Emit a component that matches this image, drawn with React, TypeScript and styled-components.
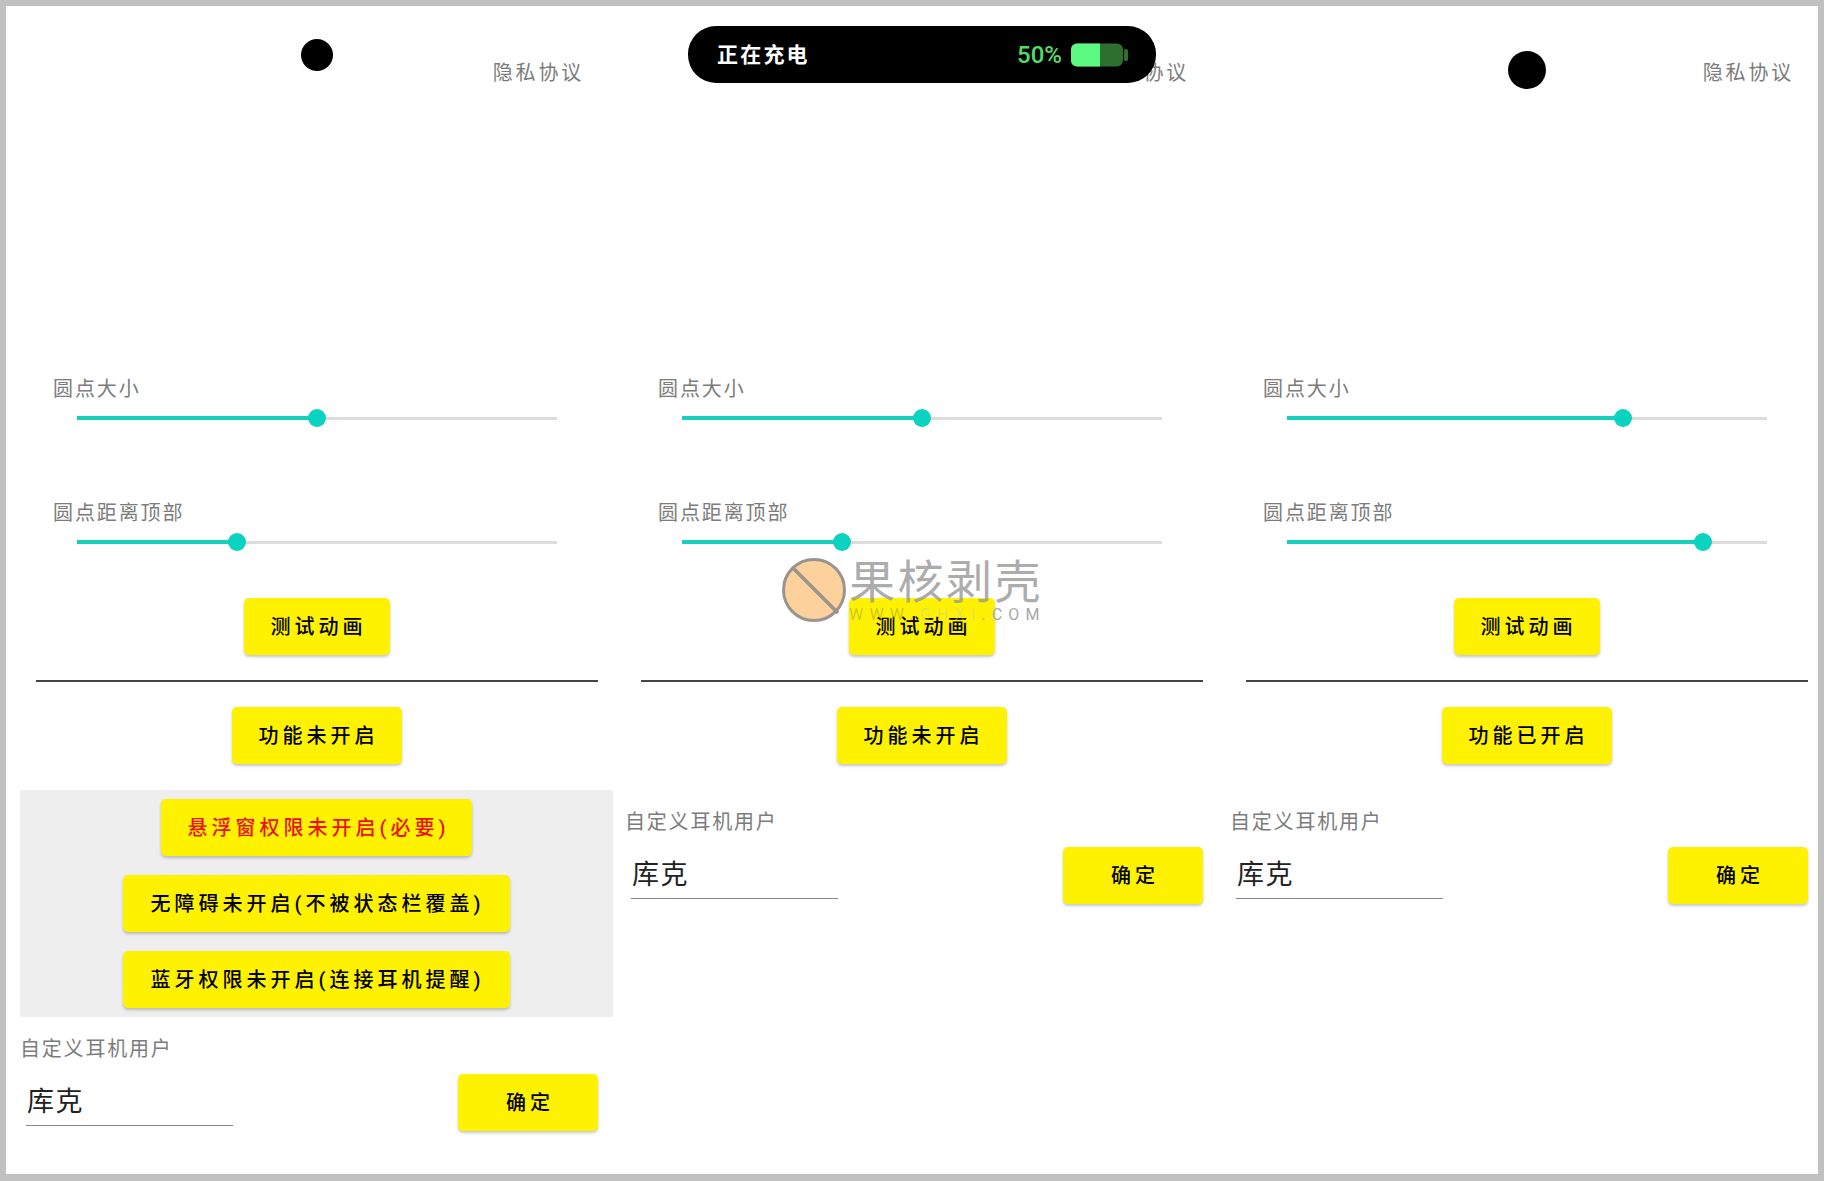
import React from "react";
import styled, { createGlobalStyle } from "styled-components";

const Global = createGlobalStyle`
  html, body { margin: 0; padding: 0; background: #fff; }
  body { font-family: Roboto, "Noto Sans CJK SC", sans-serif; }
`;

const Frame = styled.div`
  position: relative;
  box-sizing: border-box;
  width: 1824px;
  height: 1181px;
  border: 6px solid #c0c0c0;
  border-bottom-width: 7px;
  overflow: hidden;
  background: #fff;
  padding-left: 14px;
  display: grid;
  grid-template-columns: repeat(3, 593px);
  column-gap: 12px;
  align-items: start;
`;

const Column = styled.section`
  position: relative;
  width: 593px;
  display: flex;
  flex-direction: column;
`;

const Dot = styled.div<{ $size: number; $top: number }>`
  position: absolute;
  left: 50%;
  top: ${(p) => p.$top}px;
  width: ${(p) => p.$size}px;
  height: ${(p) => p.$size}px;
  margin-left: -${(p) => p.$size / 2}px;
  border-radius: 50%;
  background: #000;
`;

const Privacy = styled.div`
  align-self: flex-end;
  margin: 52px 29px 0 0;
  font-size: 20px;
  line-height: 30px;
  letter-spacing: 2.8px;
  color: #7c7c7c;
`;

const Caption = styled.div<{ $first?: boolean }>`
  margin: ${(p) => (p.$first ? "285px" : "64px")} 0 0 33px;
  font-size: 20px;
  line-height: 28px;
  padding-top: 2px;
  height: 28px;
  letter-spacing: 1.9px;
  color: #7c7c7c;
`;

const Slider = styled.div`
  position: relative;
  margin-left: 57px;
  width: 480px;
  height: 30px;
  display: flex;
  align-items: center;
`;

const Track = styled.div`
  width: 100%;
  height: 3px;
  background: #dcdcdc;
  display: flex;
  align-items: center;
`;

const Fill = styled.div`
  height: 4px;
  background: #16d0bd;
`;

const Thumb = styled.div`
  position: absolute;
  top: 50%;
  width: 18px;
  height: 18px;
  margin: -9px 0 0 -9px;
  border-radius: 50%;
  background: #0ad3c1;
`;

const Button = styled.button<{ $alert?: boolean; $wide?: boolean }>`
  display: block;
  height: 57px;
  padding: 0 ${(p) => (p.$wide ? 26 : 23)}px 2px ${(p) => (p.$wide ? 28 : 27)}px;
  border: 0;
  border-radius: 5px;
  background: #fff200;
  box-shadow: 0 2px 3px rgba(0, 0, 0, 0.22);
  font-family: Roboto, "Noto Sans CJK SC", sans-serif;
  font-size: 20px;
  font-weight: 500;
  letter-spacing: 4px;
  white-space: nowrap;
  color: ${(p) => (p.$alert ? "#e81414" : "#000")};
`;

const Centered = styled.div<{ $top: number }>`
  display: flex;
  justify-content: center;
  margin-top: ${(p) => p.$top}px;
`;

const Divider = styled.hr`
  margin: 25px 15px 0 16px;
  border: 0;
  height: 2px;
  background: #444;
`;

const PermissionPanel = styled.div`
  margin-top: 26px;
  padding: 9px 0;
  background: #eeeeee;
  display: flex;
  flex-direction: column;
  align-items: center;
  gap: 19px;
`;

const PermissionGap = styled.div`
  height: 26px;
`;

const UserLabel = styled.div`
  margin: 16px 0 0 0;
  font-size: 20px;
  line-height: 32px;
  letter-spacing: 1.8px;
  color: #7c7c7c;
`;

const UserRow = styled.div`
  display: flex;
  justify-content: space-between;
  align-items: flex-start;
  margin: 9px 15px 0 6px;
`;

const NameField = styled.div`
  box-sizing: border-box;
  width: 207px;
  height: 52px;
  padding-left: 1px;
  border-bottom: 1.5px solid #888;
  font-size: 27px;
  line-height: 56px;
  letter-spacing: 1.5px;
  color: #222;
`;

const ConfirmButton = styled(Button)`
  width: 140px;
  padding: 0 0 2px 4px;
`;

const ChargePill = styled.div`
  position: absolute;
  left: 682px;
  top: 20px;
  box-sizing: border-box;
  width: 468px;
  height: 57px;
  padding: 0 28px 0 29px;
  border-radius: 28px;
  background: #000;
  display: flex;
  align-items: center;
  justify-content: space-between;
`;

const ChargeText = styled.span`
  padding-bottom: 3px;
  font-size: 21px;
  font-weight: 700;
  letter-spacing: 2.2px;
  color: #fff;
`;

const ChargeStatus = styled.div`
  display: flex;
  align-items: center;
  gap: 9px;
`;

const Percent = styled.span`
  font-family: Roboto, sans-serif;
  font-size: 24px;
  font-weight: 500;
  color: #52dc66;
`;

const Watermark = styled.div`
  position: absolute;
  left: 774px;
  top: 550px;
  display: flex;
  gap: 1px;
  pointer-events: none;
`;

const MarkText = styled.div`
  display: flex;
  flex-direction: column;
`;

const MarkTitle = styled.div`
  font-size: 46px;
  line-height: 46px;
  margin-top: 3px;
  letter-spacing: 2.5px;
  font-weight: 400;
  color: rgba(150, 150, 150, 0.78);
`;

const MarkUrl = styled.div`
  font-size: 16px;
  line-height: 20px;
  letter-spacing: 6.2px;
  white-space: nowrap;
`;

const UrlPart = styled.span<{ $tone: string }>`
  color: ${(p) => p.$tone};
`;

type ColumnData = {
  dot: { size: number; top: number };
  size: number;
  distance: number;
  power: string;
  panel?: boolean;
};

const columns: ColumnData[] = [
  { dot: { size: 32, top: 33 }, size: 240, distance: 160, power: "功能未开启", panel: true },
  { dot: { size: 32, top: 33 }, size: 240, distance: 160, power: "功能未开启" },
  { dot: { size: 38, top: 45 }, size: 336, distance: 416, power: "功能已开启" },
];

function RangeRow({ value }: { value: number }) {
  return (
    <Slider>
      <Track>
        <Fill style={{ width: value }} />
      </Track>
      <Thumb style={{ left: value }} />
    </Slider>
  );
}

function BatteryIcon() {
  return (
    <svg width="57" height="24" viewBox="0 0 57 24">
      <rect x="0" y="0.5" width="52" height="23" rx="6" fill="#2e6e2e" />
      <path d="M6 .5h23v23H6a6 6 0 0 1-6-6v-11a6 6 0 0 1 6-6z" fill="#5cfa82" />
      <rect x="53" y="6" width="4" height="12" rx="1.5" fill="#2e6e2e" />
    </svg>
  );
}

function PhoneColumn({ data, hideDot }: { data: ColumnData; hideDot?: boolean }) {
  return (
    <Column>
      {!hideDot && <Dot $size={data.dot.size} $top={data.dot.top} />}
      <Privacy>隐私协议</Privacy>
      <Caption $first>圆点大小</Caption>
      <RangeRow value={data.size} />
      <Caption>圆点距离顶部</Caption>
      <RangeRow value={data.distance} />
      <Centered $top={41}>
        <Button>测试动画</Button>
      </Centered>
      <Divider />
      <Centered $top={25}>
        <Button>{data.power}</Button>
      </Centered>
      {data.panel ? (
        <PermissionPanel>
          <Button $alert>悬浮窗权限未开启(必要)</Button>
          <Button $wide>无障碍未开启(不被状态栏覆盖)</Button>
          <Button $wide>蓝牙权限未开启(连接耳机提醒)</Button>
        </PermissionPanel>
      ) : (
        <PermissionGap />
      )}
      <UserLabel>自定义耳机用户</UserLabel>
      <UserRow>
        <NameField>库克</NameField>
        <ConfirmButton>确定</ConfirmButton>
      </UserRow>
    </Column>
  );
}

export default function App() {
  return (
    <>
      <Global />
      <Frame>
        <PhoneColumn data={columns[0]} />
        <PhoneColumn data={columns[1]} hideDot />
        <PhoneColumn data={columns[2]} />
        <ChargePill>
          <ChargeText>正在充电</ChargeText>
          <ChargeStatus>
            <Percent>50%</Percent>
            <BatteryIcon />
          </ChargeStatus>
        </ChargePill>
        <Watermark>
          <svg width="68" height="68" viewBox="0 0 68 68">
            <circle cx="34" cy="34" r="30.5" fill="#fdd19c" stroke="#9a9490" strokeWidth="3" />
            <path d="M12 11L58 57" stroke="#9a9490" strokeWidth="3.5" />
          </svg>
          <MarkText>
            <MarkTitle>果核剥壳</MarkTitle>
            <MarkUrl>
              <UrlPart $tone="rgba(110,110,70,0.35)">WWW.</UrlPart>
              <UrlPart $tone="rgba(200,200,180,0.45)">GHXI</UrlPart>
              <UrlPart $tone="#a8a8a8">.COM</UrlPart>
            </MarkUrl>
          </MarkText>
        </Watermark>
      </Frame>
    </>
  );
}
